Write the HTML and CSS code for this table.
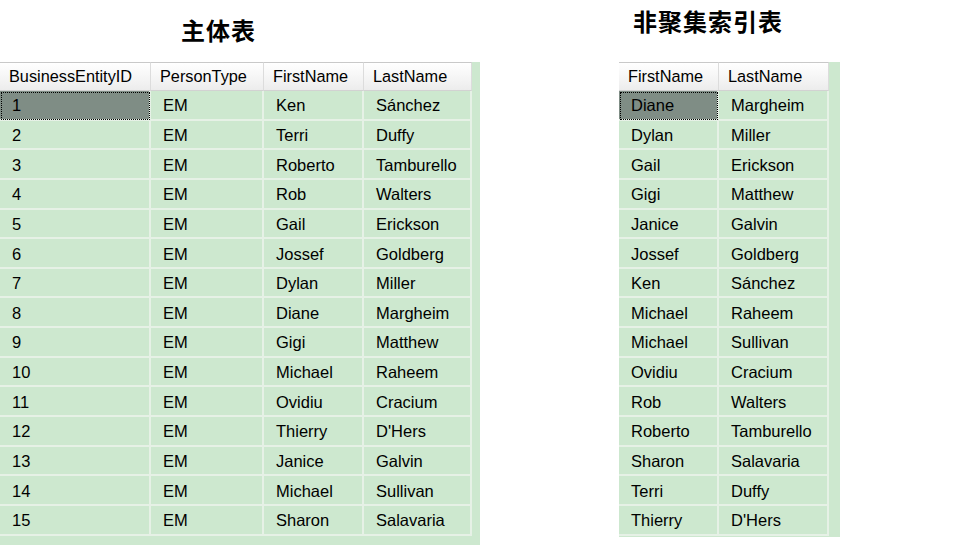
FILE: index.html
```html
<!DOCTYPE html>
<html>
<head>
<meta charset="utf-8">
<link rel="stylesheet" href="styles.css">
</head>
<body>
<div class="page">
  <section class="block block-left">
    <h2 class="title title-left">主体表</h2>
    <div class="grid-wrap wrap-left">
      <div class="grid grid-left">
        <div class="hd">BusinessEntityID</div><div class="hd">PersonType</div><div class="hd">FirstName</div><div class="hd">LastName</div>
        <div class="c sel">1</div><div class="c">EM</div><div class="c">Ken</div><div class="c">Sánchez</div>
        <div class="c">2</div><div class="c">EM</div><div class="c">Terri</div><div class="c">Duffy</div>
        <div class="c">3</div><div class="c">EM</div><div class="c">Roberto</div><div class="c">Tamburello</div>
        <div class="c">4</div><div class="c">EM</div><div class="c">Rob</div><div class="c">Walters</div>
        <div class="c">5</div><div class="c">EM</div><div class="c">Gail</div><div class="c">Erickson</div>
        <div class="c">6</div><div class="c">EM</div><div class="c">Jossef</div><div class="c">Goldberg</div>
        <div class="c">7</div><div class="c">EM</div><div class="c">Dylan</div><div class="c">Miller</div>
        <div class="c">8</div><div class="c">EM</div><div class="c">Diane</div><div class="c">Margheim</div>
        <div class="c">9</div><div class="c">EM</div><div class="c">Gigi</div><div class="c">Matthew</div>
        <div class="c">10</div><div class="c">EM</div><div class="c">Michael</div><div class="c">Raheem</div>
        <div class="c">11</div><div class="c">EM</div><div class="c">Ovidiu</div><div class="c">Cracium</div>
        <div class="c">12</div><div class="c">EM</div><div class="c">Thierry</div><div class="c">D'Hers</div>
        <div class="c">13</div><div class="c">EM</div><div class="c">Janice</div><div class="c">Galvin</div>
        <div class="c">14</div><div class="c">EM</div><div class="c">Michael</div><div class="c">Sullivan</div>
        <div class="c">15</div><div class="c">EM</div><div class="c">Sharon</div><div class="c">Salavaria</div>
      </div>
    </div>
  </section>
  <section class="block block-right">
    <h2 class="title title-right">非聚集索引表</h2>
    <div class="grid-wrap wrap-right">
      <div class="grid grid-right">
        <div class="hd">FirstName</div><div class="hd">LastName</div>
        <div class="c sel">Diane</div><div class="c">Margheim</div>
        <div class="c">Dylan</div><div class="c">Miller</div>
        <div class="c">Gail</div><div class="c">Erickson</div>
        <div class="c">Gigi</div><div class="c">Matthew</div>
        <div class="c">Janice</div><div class="c">Galvin</div>
        <div class="c">Jossef</div><div class="c">Goldberg</div>
        <div class="c">Ken</div><div class="c">Sánchez</div>
        <div class="c">Michael</div><div class="c">Raheem</div>
        <div class="c">Michael</div><div class="c">Sullivan</div>
        <div class="c">Ovidiu</div><div class="c">Cracium</div>
        <div class="c">Rob</div><div class="c">Walters</div>
        <div class="c">Roberto</div><div class="c">Tamburello</div>
        <div class="c">Sharon</div><div class="c">Salavaria</div>
        <div class="c">Terri</div><div class="c">Duffy</div>
        <div class="c">Thierry</div><div class="c">D'Hers</div>
      </div>
    </div>
  </section>
</div>
</body>
</html>
```
FILE: styles.css
```css
html, body {
  margin: 0;
  padding: 0;
  background: #ffffff;
  overflow: hidden;
}
.page {
  display: flex;
  align-items: flex-start;
  width: 968px;
  height: 545px;
  font-family: "Liberation Sans", Arial, sans-serif;
  color: #000;
}
.block {
  display: flex;
  flex-direction: column;
}
.block-left {
  width: 480px;
}
.block-right {
  margin-left: 139px;
  width: 221px;
}
.title {
  margin: 0;
  font-family: "Noto Sans CJK SC", "Noto Sans", sans-serif;
  font-weight: 700;
  font-size: 24px;
  line-height: 30px;
  letter-spacing: 1px;
}
.title-left {
  margin-top: 15px;
  margin-left: 181px;
  height: 47px;
}
.title-right {
  margin-top: 6px;
  margin-left: 14px;
  height: 56px;
}
.grid-wrap {
  background: #cde8cf;
}
.wrap-left {
  width: 480px;
  height: 483px;
}
.wrap-right {
  width: 221px;
  height: 475px;
}
.grid {
  display: grid;
  grid-auto-rows: 29.65px;
  grid-template-rows: 29px;
}
.grid-left {
  grid-template-columns: 151px 113px 100px 108px;
}
.grid-right {
  grid-template-columns: 100px 110px;
}
.hd {
  display: flex;
  align-items: center;
  padding-left: 9px;
  font-size: 16.3px;
  background: linear-gradient(#ffffff, #f4f4f4 60%, #ececec);
  border-top: 1px solid #c9c9c9;
  border-right: 1px solid #dcdcdc;
  border-bottom: 1px solid #d2d2d2;
  box-sizing: border-box;
}
.c {
  display: flex;
  align-items: center;
  padding-left: 12px;
  padding-top: 2px;
  font-size: 16.5px;
  box-sizing: border-box;
  border-right: 2px solid #e6f1e6;
  border-bottom: 2px solid #e6f1e6;
}
.sel {
  background: #7f8d85;
  outline: 1px dotted #000;
  outline-offset: -2px;
}
```
